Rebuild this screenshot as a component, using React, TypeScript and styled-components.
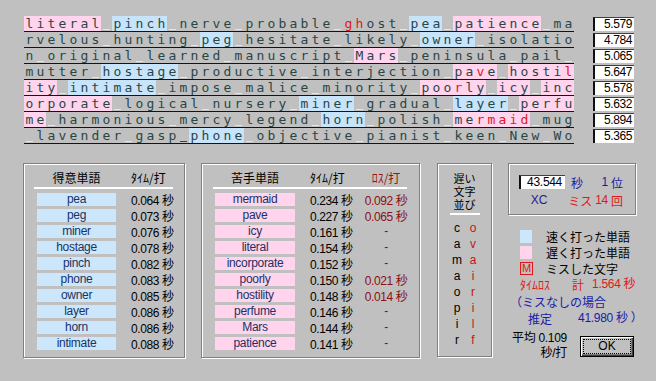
import React from "react";
import styled, { createGlobalStyle } from "styled-components";

const GlobalStyle = createGlobalStyle`
  html, body {
    margin: 0;
    padding: 0;
  }
  body {
    background: #c0c0c0;
    font-family: "Liberation Sans", "Noto Sans CJK JP", sans-serif;
    font-size: 12px;
    color: #000;
  }
`;

type Cell = { ch: string; bg?: string; red?: boolean; miss?: boolean };

// [p:..] pink word, [b:..] blue word, {..} missed letters, ~ missed space
const LINES = [
  "[p:literal] [b:pinch] nerve probable {gh}ost [b:pea] [p:patience] ma",
  "rvelous hunting [b:peg] hesitate likely [b:owner] isolatio",
  "n original learned manuscript [p:Mars] peninsula pail ",
  "mutter [b:hostage] productive interjection [p:pa{v}e] [p:hosti{l}]",
  "[p:ity] [b:intimate] impose malice minority [p:poo{r}ly] [p:icy] [p:inc]",
  "[p:orporate] logical nursery [b:miner] gradual [b:layer] [p:perfu]",
  "[p:me] harmonious mercy legend [b:horn] polish [p:me{rmaid}] mug",
  " lavender gasp~[b:phone] objective pianist keen New Wo",
];

const LINE_TIMES = ["5.579", "4.784", "5.065", "5.647", "5.578", "5.632", "5.894", "5.365"];

const FAST = [
  ["pea", "0.064"],
  ["peg", "0.073"],
  ["miner", "0.076"],
  ["hostage", "0.078"],
  ["pinch", "0.082"],
  ["phone", "0.083"],
  ["owner", "0.085"],
  ["layer", "0.086"],
  ["horn", "0.086"],
  ["intimate", "0.088"],
];

const SLOW: [string, string, string | null][] = [
  ["mermaid", "0.234", "0.092"],
  ["pave", "0.227", "0.065"],
  ["icy", "0.161", null],
  ["literal", "0.154", null],
  ["incorporate", "0.152", null],
  ["poorly", "0.150", "0.021"],
  ["hostility", "0.148", "0.014"],
  ["perfume", "0.146", null],
  ["Mars", "0.144", null],
  ["patience", "0.141", null],
];

const SLOW_LEFT = "camaopir";
const SLOW_RIGHT = "ovairilf";

const parseLine = (src: string): Cell[] => {
  const cells: Cell[] = [];
  let bg: string | undefined;
  let red = false;
  for (let i = 0; i < src.length; i++) {
    const c = src[i];
    if (c === "[") {
      bg = src[i + 1];
      i += 2;
      continue;
    }
    if (c === "]") { bg = undefined; continue; }
    if (c === "{") { red = true; continue; }
    if (c === "}") { red = false; continue; }
    if (c === "~") { cells.push({ ch: " ", miss: true }); continue; }
    cells.push({ ch: c, bg, red });
  }
  return cells;
};

const Screen = styled.div`
  width: 656px;
  height: 381px;
  box-sizing: border-box;
  padding: 16px 0 0 23px;
  display: flex;
  flex-direction: column;
  overflow: hidden;
`;

const TopArea = styled.div`
  display: flex;
  align-items: flex-start;
  padding-left: 1px;
`;

const TextBlock = styled.div`
  width: 550px;
`;

const TextRow = styled.div`
  display: flex;
  height: 15px;
  border-bottom: 1px solid #141414;
`;

const Char = styled.span<{ $bg?: string; $red?: boolean }>`
  position: relative;
  flex: none;
  width: 11px;
  height: 15px;
  line-height: 15px;
  text-align: center;
  font-family: "DejaVu Sans Mono", monospace;
  font-size: 13px;
  color: ${(p) => (p.$red ? "#e01818" : "#284646")};
  background: ${(p) =>
    p.$bg === "p" ? "#ffd4ec" : p.$bg === "b" ? "#c8e4fa" : "transparent"};
`;

const SpaceChar = styled(Char)<{ $miss?: boolean }>`
  &::after {
    content: "";
    position: absolute;
    left: 2px;
    right: 2px;
    bottom: 1px;
    height: 1px;
    background: ${(p) => (p.$miss ? "#e00000" : "#e6e6e6")};
  }
`;

const TimeColumn = styled.div`
  display: flex;
  flex-direction: column;
  gap: 2px;
  margin-left: 19px;
  padding-top: 1px;
`;

const TimeBox = styled.div`
  width: 41px;
  height: 14px;
  box-sizing: border-box;
  background: #fff;
  border-top: 1px solid #404040;
  border-left: 2px solid #101010;
  padding-right: 2px;
  text-align: right;
  line-height: 13px;
  font-size: 12px;
  letter-spacing: -0.4px;
`;

const BottomArea = styled.div`
  display: flex;
  align-items: flex-start;
  margin-top: 19px;
`;

const GroupBox = styled.div<{ $w: number; $h: number; $ml?: number }>`
  width: ${(p) => p.$w}px;
  height: ${(p) => p.$h}px;
  margin-left: ${(p) => p.$ml ?? 0}px;
  box-sizing: border-box;
  border: 1px solid #808080;
  box-shadow: inset 1px 1px 0 #fff, 1px 1px 0 #fff;
  padding-top: 7px;
  flex: none;
`;

const Table = styled.div<{ $cols: string }>`
  display: grid;
  grid-template-columns: ${(p) => p.$cols};
  grid-auto-rows: 16px;
  align-items: center;
  padding-left: 13px;
`;

const HeadTable = styled(Table)`
  grid-auto-rows: 14px;
  font-family: "Noto Sans CJK JP", sans-serif;
  line-height: 14px;
`;

const HeadCell = styled.div<{ $align?: string; $color?: string }>`
  text-align: ${(p) => p.$align ?? "left"};
  padding-left: ${(p) => (p.$align ? 0 : 15)}px;
  color: ${(p) => p.$color ?? "#000"};
  white-space: nowrap;
`;

const Rule = styled.div<{ $mx: number }>`
  height: 2px;
  background: #fff;
  margin: 2px ${(p) => p.$mx}px 2px ${(p) => p.$mx - 1}px;
`;

const WordBox = styled.div<{ $slow?: boolean }>`
  height: 13px;
  line-height: 13px;
  text-align: center;
  background: ${(p) => (p.$slow ? "#ffd4ec" : "#cce6fc")};
  color: #1a3264;
  letter-spacing: -0.3px;
  white-space: nowrap;
`;

const TimeCell = styled.div`
  padding-left: 15px;
  letter-spacing: -0.4px;
  white-space: nowrap;
`;

const LossCell = styled.div`
  text-align: center;
  color: #8a1010;
  letter-spacing: -0.4px;
  white-space: nowrap;
`;

const VerticalHead = styled.div`
  display: flex;
  flex-direction: column;
  align-items: center;
  font-family: "Noto Sans CJK JP", sans-serif;
  font-size: 11px;
  padding-top: 1px;
`;

const HeadLine = styled.div`
  height: 13px;
  line-height: 13px;
`;

const SlowRule = styled.div`
  height: 2px;
  background: #fff;
  margin: 2px 11px 5px 12px;
`;

const SlowGrid = styled.div`
  display: grid;
  grid-template-columns: 16px 16px;
  grid-auto-rows: 16px;
  align-items: center;
  padding-left: 11px;
`;

const SlowChar = styled.div<{ $red?: boolean }>`
  text-align: center;
  color: ${(p) => (p.$red ? "#c81414" : "#000")};
`;

const RightColumn = styled.div`
  width: 128px;
  margin-left: 16px;
  display: flex;
  flex-direction: column;
  font-family: "Noto Sans CJK JP", sans-serif;
`;

const ResultRow = styled.div<{ $mt?: number }>`
  display: flex;
  align-items: center;
  height: 14px;
  margin-top: ${(p) => p.$mt ?? 0}px;
  padding-left: 10px;
  padding-right: 12px;
`;

const ScoreInput = styled.div`
  width: 46px;
  height: 14px;
  box-sizing: border-box;
  background: #fff;
  border-top: 1px solid #404040;
  border-left: 2px solid #101010;
  text-align: right;
  padding-right: 3px;
  line-height: 13px;
  font-family: "Liberation Sans", sans-serif;
  letter-spacing: -0.3px;
`;

const Label = styled.span<{ $color?: string; $ml?: number; $mono?: boolean }>`
  color: ${(p) => p.$color ?? "#000"};
  margin-left: ${(p) => p.$ml ?? 0}px;
  white-space: pre;
  font-family: ${(p) =>
    p.$mono ? `"Liberation Sans", "Noto Sans CJK JP", sans-serif` : "inherit"};
  letter-spacing: ${(p) => (p.$mono ? "-0.3px" : "0")};
`;

const Push = styled.span`
  margin-left: auto;
`;

const CodeCell = styled.div`
  width: 40px;
  text-align: center;
  color: #202090;
  font-family: "Liberation Sans", sans-serif;
`;

const Legend = styled.div`
  margin-top: 13px;
`;

const LegendRow = styled.div`
  display: flex;
  align-items: center;
  height: 16px;
  padding-left: 12px;
`;

const Swatch = styled.div<{ $color: string }>`
  width: 12px;
  height: 13px;
  background: ${(p) => p.$color};
  margin-right: 14px;
`;

const MissMark = styled.div`
  width: 13px;
  height: 13px;
  box-sizing: border-box;
  border: 1px solid #e01818;
  color: #e01818;
  font-family: "Liberation Sans", sans-serif;
  font-size: 11px;
  line-height: 11px;
  text-align: center;
  margin-right: 13px;
`;

const InfoLine = styled.div<{ $color: string; $pl: number }>`
  display: flex;
  height: 17px;
  line-height: 17px;
  color: ${(p) => p.$color};
  padding-left: ${(p) => p.$pl}px;
`;

const Footer = styled.div`
  display: flex;
  align-items: flex-start;
  margin-top: 3px;
  padding-left: 4px;
`;

const Average = styled.div`
  display: flex;
  flex-direction: column;
  align-items: flex-end;
  line-height: 15px;
  padding-top: 1px;
`;

const OkButton = styled.button`
  margin-left: auto;
  margin-right: 2px;
  margin-top: 6px;
  width: 54px;
  height: 21px;
  box-sizing: border-box;
  padding: 2px;
  background: #c0c0c0;
  border: 1px solid #000;
  box-shadow: inset 1px 1px 0 #fff, inset -1px -1px 0 #404040, inset -2px -2px 0 #808080;
  font-family: "Liberation Sans", sans-serif;
  font-size: 12px;
  color: #000;

  span {
    display: block;
    height: 100%;
    box-sizing: border-box;
    border: 1px dotted #000;
    line-height: 13px;
  }
`;

const App = () => {
  return (
    <>
      <GlobalStyle />
      <Screen>
        <TopArea>
          <TextBlock>
            {LINES.map((line, r) => (
              <TextRow key={r}>
                {parseLine(line).map((c, i) =>
                  c.ch === " " ? (
                    <SpaceChar key={i} $bg={c.bg} $miss={c.miss}>
                      {"\u00a0"}
                    </SpaceChar>
                  ) : (
                    <Char key={i} $bg={c.bg} $red={c.red}>
                      {c.ch}
                    </Char>
                  )
                )}
              </TextRow>
            ))}
          </TextBlock>
          <TimeColumn>
            {LINE_TIMES.map((t) => (
              <TimeBox key={t}>{t}</TimeBox>
            ))}
          </TimeColumn>
        </TopArea>

        <BottomArea>
          <GroupBox $w={162} $h={195}>
            <HeadTable $cols="79px 1fr">
              <HeadCell $align="center">得意単語</HeadCell>
              <HeadCell>ﾀｲﾑ/打</HeadCell>
            </HeadTable>
            <Rule $mx={11} />
            <Table $cols="79px 1fr">
              {FAST.map(([w, t]) => (
                <React.Fragment key={w}>
                  <WordBox>{w}</WordBox>
                  <TimeCell>{t} 秒</TimeCell>
                </React.Fragment>
              ))}
            </Table>
          </GroupBox>

          <GroupBox $w={219} $h={195} $ml={16}>
            <HeadTable $cols="80px 64px 54px">
              <HeadCell $align="center">苦手単語</HeadCell>
              <HeadCell>ﾀｲﾑ/打</HeadCell>
              <HeadCell $align="center" $color="#a01010">ﾛｽ/打</HeadCell>
            </HeadTable>
            <Rule $mx={12} />
            <Table $cols="80px 64px 54px">
              {SLOW.map(([w, t, l]) => (
                <React.Fragment key={w}>
                  <WordBox $slow>{w}</WordBox>
                  <TimeCell>{t} 秒</TimeCell>
                  <LossCell>{l ? `${l} 秒` : "-"}</LossCell>
                </React.Fragment>
              ))}
            </Table>
          </GroupBox>

          <GroupBox $w={55} $h={194} $ml={17}>
            <VerticalHead>
              <HeadLine>遅い</HeadLine>
              <HeadLine>文字</HeadLine>
              <HeadLine>並び</HeadLine>
            </VerticalHead>
            <SlowRule />
            <SlowGrid>
              {SLOW_LEFT.split("").map((c, i) => (
                <React.Fragment key={i}>
                  <SlowChar>{c}</SlowChar>
                  <SlowChar $red>{SLOW_RIGHT[i]}</SlowChar>
                </React.Fragment>
              ))}
            </SlowGrid>
          </GroupBox>

          <RightColumn>
            <GroupBox $w={128} $h={52}>
              <ResultRow $mt={4}>
                <ScoreInput>43.544</ScoreInput>
                <Label $color="#1a1aa8" $ml={6}>秒</Label>
                <Push />
                <Label $color="#1a1aa8" $mono>1 </Label>
                <Label $color="#1a1aa8">位</Label>
              </ResultRow>
              <ResultRow $mt={4}>
                <CodeCell>XC</CodeCell>
                <Push />
                <Label $color="#e01818">ミス</Label>
                <Label $color="#e01818" $ml={3} $mono>14</Label>
                <Label $color="#e01818" $ml={3}>回</Label>
              </ResultRow>
            </GroupBox>

            <Legend>
              <LegendRow>
                <Swatch $color="#cce6fc" />
                速く打った単語
              </LegendRow>
              <LegendRow>
                <Swatch $color="#ffd4ec" />
                遅く打った単語
              </LegendRow>
              <LegendRow>
                <MissMark>M</MissMark>
                ミスした文字
              </LegendRow>
            </Legend>

            <InfoLine $color="#e01818" $pl={12}>
              <Label $color="#e01818">ﾀｲﾑﾛｽ</Label>
              <Label $color="#e01818" $ml={22}>計</Label>
              <Label $color="#e01818" $ml={8} $mono>1.564 秒</Label>
            </InfoLine>
            <InfoLine $color="#1a1aa8" $pl={2}>（ミスなしの場合</InfoLine>
            <InfoLine $color="#1a1aa8" $pl={20}>
              <Label $color="#1a1aa8">推定</Label>
              <Label $color="#1a1aa8" $ml={26} $mono>41.980 秒 ）</Label>
            </InfoLine>

            <Footer>
              <Average>
                <Label $mono>平均 0.109</Label>
                <Label $mono>秒/打</Label>
              </Average>
              <OkButton>
                <span>OK</span>
              </OkButton>
            </Footer>
          </RightColumn>
        </BottomArea>
      </Screen>
    </>
  );
};

export default App;
